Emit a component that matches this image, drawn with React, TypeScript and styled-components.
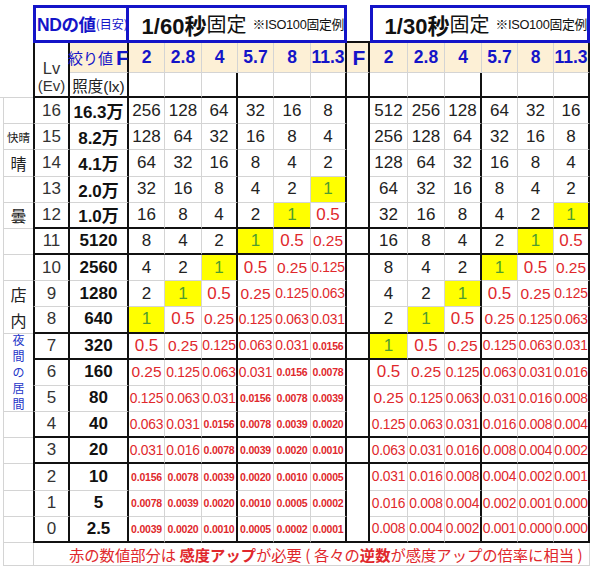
import React from "react";
import styled, { createGlobalStyle } from "styled-components";

const BLUE = "#1414c8";
const RED = "#e0282c";
const GREEN = "#4f9d2f";
const LIGHT = "#d4d4d4";
const BEIGE = "#fdf0d6";

type Line = "k" | "t" | "n";
const edge = (l: Line = "n") =>
  l === "k" ? "2px solid #111" : l === "t" ? `1px solid ${LIGHT}` : "none";

const GlobalStyle = createGlobalStyle`
  html, body { margin: 0; padding: 0; background: #fff; }
  body {
    font-family: "Liberation Sans", Arial, "Noto Sans CJK JP", sans-serif;
    color: #222;
  }
`;

const Sheet = styled.div`
  display: grid;
  grid-template-columns: 33px 37px 59px 36px 37px 36px 36px 37px 36px 23px 38px 37px 37px 36px 36px 36px 6px;
  grid-template-rows: 38px 30px 25px repeat(17, 26.18px) 23px;
  padding-top: 5px;
  width: 596px;
  height: 570px;
  box-sizing: border-box;
`;

const Cell = styled.div<{ $r?: Line; $b?: Line; $l?: Line; $span?: number; $rows?: number; $bg?: string }>`
  box-sizing: border-box;
  grid-column: span ${(p) => p.$span ?? 1};
  grid-row: span ${(p) => p.$rows ?? 1};
  display: flex;
  align-items: center;
  justify-content: center;
  white-space: nowrap;
  background: ${(p) => p.$bg ?? "transparent"};
  border-right: ${(p) => edge(p.$r)};
  border-bottom: ${(p) => edge(p.$b)};
  border-left: ${(p) => edge(p.$l)};
`;

const FootCell = styled(Cell)`
  justify-content: flex-start;
  padding-left: 35px;
`;

const HeadBox = styled.div<{ $span: number; $noLeft?: boolean; $pad?: number }>`
  box-sizing: border-box;
  grid-column: span ${(p) => p.$span};
  border: 3px solid ${BLUE};
  border-left-width: ${(p) => (p.$noLeft ? 0 : 3)}px;
  display: flex;
  align-items: center;
  justify-content: ${(p) => (p.$pad === undefined ? "flex-end" : "flex-start")};
  padding-left: ${(p) => p.$pad ?? 0}px;
  padding-bottom: 1px;
  white-space: nowrap;
  overflow: visible;
`;

const NdTitle = styled.span`
  color: ${BLUE};
  font-weight: bold;
  font-size: 17.5px;
  letter-spacing: -0.4px;
`;

const NdSub = styled.span`
  color: ${BLUE};
  font-size: 12px;
  font-family: "Noto Sans CJK JP", sans-serif;
`;

const Shutter = styled.span`
  font-weight: bold;
  font-size: 22px;
  color: #111;
`;

const Fixed = styled.span`
  font-size: 20px;
  color: #111;
  font-family: "Noto Sans CJK JP", sans-serif;
  margin-right: 6px;
`;

const Note = styled.span`
  font-size: 12.8px;
  color: #111;
  letter-spacing: -0.3px;
`;

const ApLabel = styled.span`
  color: ${BLUE};
  font-size: 15px;
  font-family: "Noto Sans CJK JP", sans-serif;
`;

const BigF = styled.span`
  color: ${BLUE};
  font-weight: bold;
  font-size: 21px;
  margin-left: 3px;
`;

const FNum = styled.span`
  color: ${BLUE};
  font-weight: bold;
  font-size: 17.5px;
`;

const LvHead = styled.div`
  font-size: 16.5px;
  line-height: 17px;
  text-align: center;
  color: #333;
  padding-bottom: 2px;
  align-self: flex-end;
`;

const LvSmall = styled.div`
  font-size: 15px;
`;

const LuxHead = styled.span`
  font-size: 15.5px;
  color: #222;
`;

const LabelCell = styled.div<{ $rows?: number; $b?: Line }>`
  box-sizing: border-box;
  grid-row: span ${(p) => p.$rows ?? 1};
  margin-left: 3px;
  border-left: 1px solid ${LIGHT};
  border-bottom: ${(p) => edge(p.$b ?? "t")};
  display: flex;
  align-items: center;
  justify-content: center;
  font-family: "Noto Sans CJK JP", sans-serif;
  color: #222;
`;

const SmallLabel = styled.span`
  font-size: 11.5px;
`;

const BigLabel = styled.span`
  font-size: 16px;
  width: 1em;
  line-height: 26px;
  text-align: center;
`;

const NightLabel = styled.span`
  font-size: 12px;
  width: 1em;
  line-height: 16px;
  text-align: center;
  color: #2436c8;
`;

const LvNum = styled.span`
  font-size: 17px;
  color: #333;
`;

const LuxNum = styled.span`
  font-size: 17px;
  font-weight: bold;
  color: #111;
`;

const sizes: Record<number, string> = { 1: "17px", 2: "17px", 3: "17px", 4: "15.5px", 5: "13.8px", 6: "10.5px" };

const Val = styled.span<{ $len: number; $tone: "black" | "red" | "one" }>`
  font-size: ${(p) => sizes[p.$len] ?? "10.5px"};
  font-weight: ${(p) => (p.$len >= 6 ? "bold" : "normal")};
  color: ${(p) => (p.$tone === "red" ? RED : p.$tone === "one" ? GREEN : "#222")};
  letter-spacing: ${(p) => (p.$len >= 5 ? "-0.2px" : "0")};
`;

const FootText = styled.span`
  color: ${RED};
  font-size: 15.3px;
  font-family: "Noto Sans CJK JP", sans-serif;
`;

const Strong = styled.b`
  font-weight: bold;
`;

const L = (s: string) => s.split(" ");

type Row = { lv: number; lux: string; left: string[]; right: string[]; b: Line };

const rows: Row[] = [
  { lv: 16, lux: "16.3万", left: L("256 128 64 32 16 8"), right: L("512 256 128 64 32 16"), b: "t" },
  { lv: 15, lux: "8.2万", left: L("128 64 32 16 8 4"), right: L("256 128 64 32 16 8"), b: "t" },
  { lv: 14, lux: "4.1万", left: L("64 32 16 8 4 2"), right: L("128 64 32 16 8 4"), b: "t" },
  { lv: 13, lux: "2.0万", left: L("32 16 8 4 2 1"), right: L("64 32 16 8 4 2"), b: "t" },
  { lv: 12, lux: "1.0万", left: L("16 8 4 2 1 0.5"), right: L("32 16 8 4 2 1"), b: "k" },
  { lv: 11, lux: "5120", left: L("8 4 2 1 0.5 0.25"), right: L("16 8 4 2 1 0.5"), b: "k" },
  { lv: 10, lux: "2560", left: L("4 2 1 0.5 0.25 0.125"), right: L("8 4 2 1 0.5 0.25"), b: "t" },
  { lv: 9, lux: "1280", left: L("2 1 0.5 0.25 0.125 0.063"), right: L("4 2 1 0.5 0.25 0.125"), b: "t" },
  { lv: 8, lux: "640", left: L("1 0.5 0.25 0.125 0.063 0.031"), right: L("2 1 0.5 0.25 0.125 0.063"), b: "k" },
  { lv: 7, lux: "320", left: L("0.5 0.25 0.125 0.063 0.031 0.0156"), right: L("1 0.5 0.25 0.125 0.063 0.031"), b: "k" },
  { lv: 6, lux: "160", left: L("0.25 0.125 0.063 0.031 0.0156 0.0078"), right: L("0.5 0.25 0.125 0.063 0.031 0.016"), b: "t" },
  { lv: 5, lux: "80", left: L("0.125 0.063 0.031 0.0156 0.0078 0.0039"), right: L("0.25 0.125 0.063 0.031 0.016 0.008"), b: "t" },
  { lv: 4, lux: "40", left: L("0.063 0.031 0.0156 0.0078 0.0039 0.0020"), right: L("0.125 0.063 0.031 0.016 0.008 0.004"), b: "k" },
  { lv: 3, lux: "20", left: L("0.031 0.016 0.0078 0.0039 0.0020 0.0010"), right: L("0.063 0.031 0.016 0.008 0.004 0.002"), b: "k" },
  { lv: 2, lux: "10", left: L("0.0156 0.0078 0.0039 0.0020 0.0010 0.0005"), right: L("0.031 0.016 0.008 0.004 0.002 0.001"), b: "t" },
  { lv: 1, lux: "5", left: L("0.0078 0.0039 0.0020 0.0010 0.0005 0.0002"), right: L("0.016 0.008 0.004 0.002 0.001 0.000"), b: "t" },
  { lv: 0, lux: "2.5", left: L("0.0039 0.0020 0.0010 0.0005 0.0002 0.0001"), right: L("0.008 0.004 0.002 0.001 0.000 0.000"), b: "k" },
];

const fStops = ["2", "2.8", "4", "5.7", "8", "11.3"];
// right border of each value column inside a group
const groupRight: Line[] = ["t", "t", "k", "t", "t", "k"];
const beigeRight: Line[] = ["t", "t", "t", "t", "t", "k"];

// label column: what sits left of each Lv row (null = covered by a merged cell above)
const labels: Record<number, React.ReactNode | null> = {
  15: <SmallLabel>快晴</SmallLabel>,
  14: <BigLabel>晴</BigLabel>,
  12: <BigLabel>曇</BigLabel>,
  9: <BigLabel>店内</BigLabel>,
  8: null,
  7: <NightLabel>夜間の居間</NightLabel>,
  6: null,
  5: null,
};
const labelRows: Record<number, number> = { 9: 2, 7: 3 };

const ValueGroup = ({ vals, b }: { vals: string[]; b: Line }) => (
  <>
    {vals.map((v, i) => {
      const one = v === "1";
      const tone = one ? "one" : parseFloat(v) < 1 ? "red" : "black";
      return (
        <Cell key={i} $r={groupRight[i]} $b={b === "k" ? "k" : "t"} $bg={one ? "#ffff00" : undefined}>
          <Val $len={v.length} $tone={tone}>{v}</Val>
        </Cell>
      );
    })}
  </>
);

const DataRow = ({ row }: { row: Row }) => {
  const label = labels[row.lv];
  return (
    <>
      {label !== null && <LabelCell $rows={labelRows[row.lv]}>{label}</LabelCell>}
      <Cell $l="k" $r="k" $b={row.b}>
        <LvNum>{row.lv}</LvNum>
      </Cell>
      <Cell $r="k" $b={row.b}>
        <LuxNum>{row.lux}</LuxNum>
      </Cell>
      <ValueGroup vals={row.left} b={row.b} />
      <Cell $r="k" $b={row.b === "k" ? "k" : "n"} />
      <ValueGroup vals={row.right} b={row.b} />
      <Cell />
    </>
  );
};

export default function App() {
  return (
    <>
      <GlobalStyle />
      <Sheet>
        {/* row 1: titles */}
        <Cell />
        <HeadBox $span={2} $pad={1}>
          <NdTitle>NDの値</NdTitle>
          <NdSub>(目安)</NdSub>
        </HeadBox>
        <HeadBox $span={6} $noLeft>
          <Shutter>1/60秒</Shutter>
          <Fixed>固定</Fixed>
          <Note>※ISO100固定例</Note>
        </HeadBox>
        <Cell $b="k" />
        <HeadBox $span={6}>
          <Shutter>1/30秒</Shutter>
          <Fixed>固定</Fixed>
          <Note>※ISO100固定例</Note>
        </HeadBox>
        <Cell />

        {/* row 2: apertures */}
        <Cell />
        <Cell $rows={2} $l="k" $r="k" $b="k">
          <LvHead>
            Lv
            <LvSmall>(Ev)</LvSmall>
          </LvHead>
        </Cell>
        <Cell $r="k" $b="t" $bg={BEIGE}>
          <ApLabel>絞り値</ApLabel>
          <BigF>F</BigF>
        </Cell>
        {fStops.map((f, i) => (
          <Cell key={"fa" + i} $r={beigeRight[i]} $b="t" $bg={BEIGE}>
            <FNum>{f}</FNum>
          </Cell>
        ))}
        <Cell $r="k" $b="t" $bg={BEIGE}>
          <BigF>F</BigF>
        </Cell>
        {fStops.map((f, i) => (
          <Cell key={"fb" + i} $r={beigeRight[i]} $b="t" $bg={BEIGE}>
            <FNum>{f}</FNum>
          </Cell>
        ))}
        <Cell />

        {/* row 3: lux header */}
        <Cell $b="t" />
        <Cell $r="k" $b="k">
          <LuxHead>照度(lx)</LuxHead>
        </Cell>
        {groupRight.map((r, i) => (
          <Cell key={"ea" + i} $r={r} $b="k" />
        ))}
        <Cell $r="k" $b="k" />
        {groupRight.map((r, i) => (
          <Cell key={"eb" + i} $r={r} $b="k" />
        ))}
        <Cell />

        {rows.map((row) => (
          <DataRow key={row.lv} row={row} />
        ))}

        {/* footer */}
        <LabelCell />
        <FootCell $span={15} $l="t" $r="t" $b="t">
          <FootText>
            赤の数値部分は <Strong>感度アップ</Strong>が必要 ( 各々の<Strong>逆数</Strong>が感度アップの倍率に相当 )
          </FootText>
        </FootCell>
        <Cell />
      </Sheet>
    </>
  );
}
